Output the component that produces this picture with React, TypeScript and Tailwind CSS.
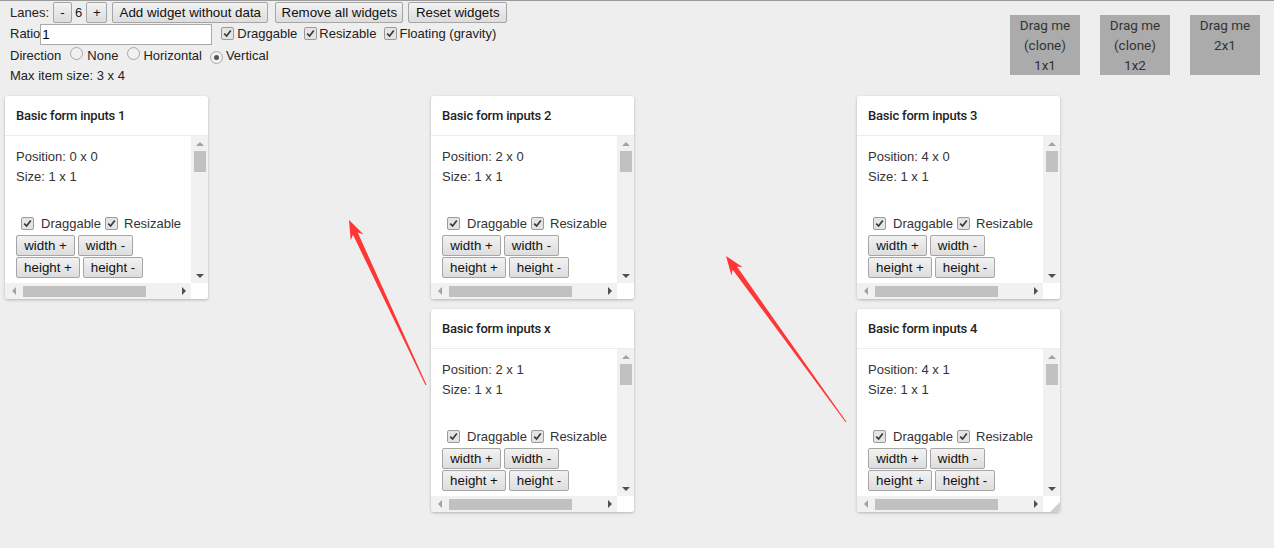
import React from "react";

const font = { fontFamily: '"Liberation Sans", Arial, sans-serif' };

// small grey native-looking checkbox
function Check() {
  return (
    <span className="inline-flex items-center justify-center w-[13px] h-[13px] rounded-[2px] border border-[#9b9b9b] bg-[#e4e4e4]">
      <svg width="9" height="9" viewBox="0 0 9 9">
        <path d="M1.2 4.6 L3.6 7 L7.8 1.6" fill="none" stroke="#3a3a3a" strokeWidth="1.7" />
      </svg>
    </span>
  );
}

function Radio({ on }: { on?: boolean }) {
  return (
    <span className="inline-flex items-center justify-center w-[13px] h-[13px] rounded-full border border-[#a8a8a8] bg-[#f0f0f0]">
      {on && <span className="w-[5px] h-[5px] rounded-full bg-[#555]" />}
    </span>
  );
}

function Btn({ children, cls = "" }: { children: React.ReactNode; cls?: string }) {
  return (
    <button
      className={`h-[21px] px-0 text-center text-[13.33px] leading-none text-[#111] border border-[#a6a6a6] rounded-[2px] bg-gradient-to-b from-[#f2f2f2] to-[#dddddd] ${cls}`}
    >
      {children}
    </button>
  );
}

function Tri({ dir, color }: { dir: "up" | "down" | "left" | "right"; color: string }) {
  const pts = {
    up: "0,4 4,0 8,4",
    down: "0,0 8,0 4,4",
    left: "4,0 4,8 0,4",
    right: "0,0 0,8 4,4",
  }[dir];
  const w = dir === "up" || dir === "down" ? 8 : 4;
  const h = dir === "up" || dir === "down" ? 4 : 8;
  return (
    <svg width={w} height={h} viewBox={`0 0 ${w} ${h}`}>
      <polygon points={pts} fill={color} />
    </svg>
  );
}

type CardProps = { title: string; pos: string; cls: string; handle?: boolean };

function Card({ title, pos, cls, handle }: CardProps) {
  return (
    <div className={`${cls} m-[5px] bg-white rounded-[3px] shadow-[0_1px_3px_rgba(0,0,0,0.25)] flex flex-col overflow-hidden`}>
      <div className="h-[40px] shrink-0 flex items-center px-[11px] pt-[1px] border-b border-[#ececec]">
        <span className="text-[13px] text-[#222] font-medium tracking-[-0.2px]" style={{ fontFamily: "Roboto, sans-serif" }}>
          {title}
        </span>
      </div>
      <div className="flex-1 flex flex-col min-h-0">
        <div className="flex-1 flex min-h-0">
          {/* content */}
          <div className="flex-1 overflow-hidden pl-[11px] pt-[11px] text-[13px] text-[#333] leading-[20px] whitespace-nowrap" style={font}>
            <div>Position: {pos}</div>
            <div>Size: 1 x 1</div>
            <div className="mt-[27px] h-[20px] flex items-center">
              <span className="ml-[5px]"><Check /></span>
              <span className="ml-[7px]">Draggable</span>
              <span className="ml-[4px]"><Check /></span>
              <span className="ml-[6px]">Resizable</span>
            </div>
            <div className="flex gap-[3px] mt-[1px]">
              <Btn cls="w-[59px]">width +</Btn>
              <Btn cls="w-[55px]">width -</Btn>
            </div>
            <div className="flex gap-[3px] mt-[1px]">
              <Btn cls="w-[64px]">height +</Btn>
              <Btn cls="w-[60px]">height -</Btn>
            </div>
          </div>
          {/* vertical scrollbar */}
          <div className="w-[17px] shrink-0 bg-[#f1f1f1] flex flex-col items-center">
            <div className="h-[15px] flex items-center justify-center">
              <Tri dir="up" color="#a3a3a3" />
            </div>
            <div className="w-[12px] h-[21px] bg-[#c1c1c1]" />
            <div className="flex-1" />
            <div className="h-[15px] flex items-center justify-center">
              <Tri dir="down" color="#505050" />
            </div>
          </div>
        </div>
        {/* horizontal scrollbar */}
        <div className="h-[16px] shrink-0 flex">
          <div className="flex-1 bg-[#f1f1f1] flex items-center">
            <div className="w-[18px] flex justify-center">
              <Tri dir="left" color="#a3a3a3" />
            </div>
            <div className="w-[123px] h-[11px] bg-[#c1c1c1]" />
            <div className="flex-1" />
            <div className="w-[15px] flex justify-center">
              <Tri dir="right" color="#505050" />
            </div>
          </div>
          <div className="w-[17px] bg-white flex items-end justify-end">
            {handle && (
              <svg width="10" height="10" viewBox="0 0 10 10">
                <polygon points="10,0 10,10 0,10" fill="#cfcfcf" />
              </svg>
            )}
          </div>
        </div>
      </div>
    </div>
  );
}

function arrowPoints(tx: number, ty: number, px: number, py: number) {
  const dx = px - tx;
  const dy = py - ty;
  const len = Math.hypot(dx, dy);
  const ux = dx / len;
  const uy = dy / len;
  const nx = -uy;
  const ny = ux;
  const nk = (k: number) => [px - ux * k, py - uy * k];
  const [ax, ay] = nk(15);
  const [bx, by] = nk(19);
  const p = (x: number, y: number) => `${x.toFixed(1)},${y.toFixed(1)}`;
  return [
    p(tx + nx * 0.5, ty + ny * 0.5),
    p(ax + nx * 2.6, ay + ny * 2.6),
    p(bx + nx * 7, by + ny * 7),
    p(px, py),
    p(bx - nx * 7, by - ny * 7),
    p(ax - nx * 2.6, ay - ny * 2.6),
    p(tx - nx * 0.5, ty - ny * 0.5),
  ].join(" ");
}

export default function App() {
  return (
    <div className="relative w-[1274px] h-[548px] bg-[#eeeeee] border-t border-[#9c9c9c] overflow-hidden text-[#222]" style={font}>
      <div className="flex justify-between h-[90px]">
        <div className="pl-[10px] text-[13px]">
          <div className="flex items-center h-[22px] pt-[1px]">
            <span>Lanes:</span>
            <Btn cls="w-[19px] ml-[4px]">-</Btn>
            <span className="ml-[3px]">6</span>
            <Btn cls="w-[21px] ml-[4px]">+</Btn>
            <Btn cls="w-[156px] ml-[5px]">Add widget without data</Btn>
            <Btn cls="w-[128px] ml-[7px]">Remove all widgets</Btn>
            <Btn cls="w-[99px] ml-[5px]">Reset widgets</Btn>
          </div>
          <div className="flex items-center h-[22px]">
            <span>Ratio</span>
            <input
              readOnly
              value="1"
              className="w-[172px] h-[21px] border border-[#a9a9a9] bg-white px-[1px] text-[13.33px] text-black outline-none"
              style={font}
            />
            <span className="ml-[9px]"><Check /></span>
            <span className="ml-[3px]">Draggable</span>
            <span className="ml-[7px]"><Check /></span>
            <span className="ml-[2px]">Resizable</span>
            <span className="ml-[8px]"><Check /></span>
            <span className="ml-[2px]">Floating (gravity)</span>
          </div>
          <div className="flex items-center h-[21px] pt-[1px]">
            <span>Direction</span>
            <span className="ml-[9px]"><Radio /></span>
            <span className="ml-[4px]">None</span>
            <span className="ml-[9px]"><Radio /></span>
            <span className="ml-[3px]">Horizontal</span>
            <span className="ml-[8px]"><Radio on /></span>
            <span className="ml-[3px]">Vertical</span>
          </div>
          <div className="h-[20px] flex items-center">Max item size: 3 x 4</div>
        </div>
        <div className="flex gap-[20px] pt-[15px] pr-[14px]" style={{ fontFamily: "Roboto, sans-serif" }}>
          {[
            ["Drag me", "(clone)", "1x1"],
            ["Drag me", "(clone)", "1x2"],
            ["Drag me", "2x1"],
          ].map((lines, i) => (
            <div key={i} className="w-[70px] h-[60px] bg-[#ababab] text-[#333] text-[13.5px] leading-[20px] text-center -mt-[1px] pt-0">
              {lines.map((l, j) => (
                <div key={j}>{l}</div>
              ))}
            </div>
          ))}
        </div>
      </div>

      <div className="grid grid-cols-[repeat(6,213px)] auto-rows-[213px]">
        <Card title="Basic form inputs 1" pos="0 x 0" cls="col-start-1 row-start-1" />
        <Card title="Basic form inputs 2" pos="2 x 0" cls="col-start-3 row-start-1" />
        <Card title="Basic form inputs x" pos="2 x 1" cls="col-start-3 row-start-2" />
        <Card title="Basic form inputs 3" pos="4 x 0" cls="col-start-5 row-start-1" />
        <Card title="Basic form inputs 4" pos="4 x 1" cls="col-start-5 row-start-2" handle />
      </div>

      {/* annotation arrows */}
      <svg className="absolute left-0 top-0 pointer-events-none" width="1274" height="548">
        <polygon points={arrowPoints(426, 384, 349, 219)} fill="#ff3636" />
        <polygon points={arrowPoints(846, 421, 726, 255)} fill="#ff3636" />
      </svg>
    </div>
  );
}
